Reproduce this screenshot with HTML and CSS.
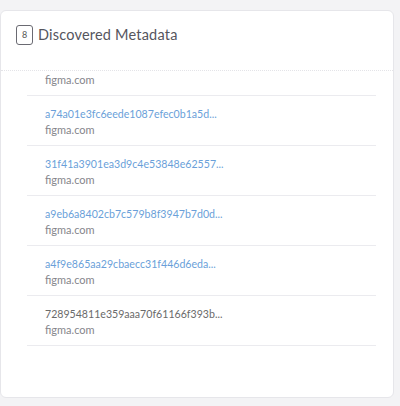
FILE: index.html
```html
<!DOCTYPE html>
<html>
<head>
<meta charset="utf-8">
<link rel="stylesheet" href="styles.css">
</head>
<body>
<div class="card">
  <div class="header">
    <span class="badge">8</span>
    <span class="title">Discovered Metadata</span>
  </div>
  <div class="list-wrap">
    <ul class="list">
      <li class="item"><span class="hash">f1e2d3c4b5a6978812345abcdef0123...</span><span class="domain">figma.com</span></li>
      <li class="item"><span class="hash">a74a01e3fc6eede1087efec0b1a5d...</span><span class="domain">figma.com</span></li>
      <li class="item"><span class="hash">31f41a3901ea3d9c4e53848e62557...</span><span class="domain">figma.com</span></li>
      <li class="item"><span class="hash">a9eb6a8402cb7c579b8f3947b7d0d...</span><span class="domain">figma.com</span></li>
      <li class="item"><span class="hash">a4f9e865aa29cbaecc31f446d6eda...</span><span class="domain">figma.com</span></li>
      <li class="item"><span class="hash plain">728954811e359aaa70f61166f393b...</span><span class="domain">figma.com</span></li>
    </ul>
  </div>
</div>
</body>
</html>
```
FILE: styles.css
```css
html, body {
  margin: 0;
  padding: 0;
  background: #f3f3f5;
  font-family: "Lato", "Open Sans", sans-serif;
}
body {
  padding: 10px 6px 8px 0;
  height: 406px;
  box-sizing: border-box;
}
.card {
  background: #fff;
  border: 1px solid #e6e6ea;
  border-radius: 6px;
  height: 388px;
  box-sizing: border-box;
  display: flex;
  flex-direction: column;
}
.header {
  height: 60px;
  display: flex;
  align-items: center;
  gap: 5px;
  padding: 0 0 12px 15px;
  border-bottom: 1px dotted #e4e4e8;
  box-sizing: border-box;
}
.badge {
  width: 17px;
  height: 20px;
  box-sizing: border-box;
  border: 1px solid #6a6a72;
  border-radius: 3px;
  font-size: 9px;
  color: #555;
  display: flex;
  align-items: center;
  justify-content: center;
}
.title {
  font-size: 14.5px;
  color: #55555d;
  letter-spacing: 0.2px;
}
.list-wrap {
  overflow: hidden;
  height: 275px;
}
.list {
  list-style: none;
  margin: -25px 0 0 0;
  padding: 0 17px 0 26px;
}
.item {
  height: 50px;
  border-bottom: 1px solid #ebebef;
  box-sizing: border-box;
  display: flex;
  flex-direction: column;
  justify-content: center;
  padding: 3px 0 0 18px;
  gap: 2px;
}
.hash {
  font-size: 10.6px;
  color: #6a9fd9;
  line-height: 14px;
}
.hash.plain {
  color: #6a6a6a;
}
.domain {
  font-size: 11px;
  color: #85858b;
  line-height: 14px;
}
```
